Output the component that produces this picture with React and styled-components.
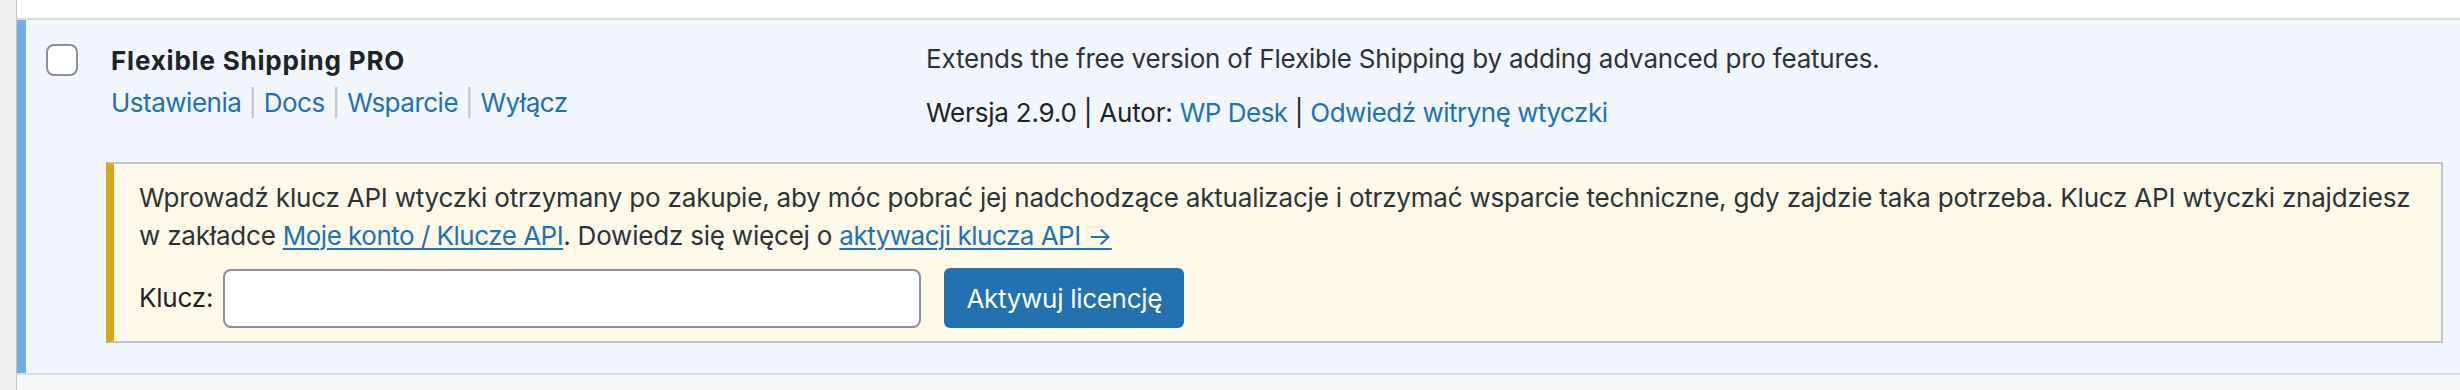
import React from "react"
import styled, { createGlobalStyle } from "styled-components"

const GlobalStyle = createGlobalStyle`
  html, body {
    margin: 0;
    padding: 0;
    background: #f0f0f1;
    font-family: Inter, "Liberation Sans", Arial, sans-serif;
    font-size: 26px;
    letter-spacing: -0.2px;
    color: #2c3338;
  }
`

const Page = styled.div`
  padding-left: 16px;
  min-height: 100vh;
  display: flex;
`

const Table = styled.div`
  flex: 1;
  min-width: 0;
  display: flex;
  flex-direction: column;
  border-left: 1px solid #c3c4c7;
  background: #fff;
`

const PrevRow = styled.div`
  height: 18px;
  background: #fff;
`

const PluginRow = styled.div`
  border-top: 2px solid #dcdcde;
  background: #f0f6fc;
  box-shadow: inset 9px 0 0 #72aee6;
  padding: 20px 17px 30px 0;
`

const MainLine = styled.div`
  display: grid;
  grid-template-columns: 94px 815px 1fr;
  align-items: start;
`

const CheckCell = styled.div`
  padding: 4px 0 0 29px;
`

const Checkbox = styled.input`
  appearance: none;
  display: block;
  margin: 0;
  width: 32px;
  height: 32px;
  border: 2px solid #8c8f94;
  border-radius: 8px;
  background: #fff;
  box-sizing: border-box;
`

const TitleCell = styled.div`
  padding-top: 2px;
`

const PluginName = styled.div`
  font-weight: 700;
  letter-spacing: 0.8px;
  color: #1d2327;
  line-height: 38px;
  margin-bottom: 4px;
`

const RowActions = styled.div`
  display: flex;
  align-items: center;
  line-height: 38px;
`

const Link = styled.a`
  color: #2271b1;
  letter-spacing: -0.5px;
  text-decoration: ${p => (p.$underline ? "underline" : "none")};
  text-underline-offset: 3px;
  text-decoration-thickness: 2px;
`

const Sep = styled.span`
  color: #c3c4c7;
  padding: 0 7px;
`

const DescCell = styled.div`
  min-width: 0;
`

const Description = styled.p`
  margin: 0 0 16px;
  line-height: 38px;
  color: #2c3338;
`

const Meta = styled.div`
  line-height: 38px;
  color: #1d2327;
`

const Notice = styled.div`
  margin: 30px 0 0 89px;
  background: #fcf9e8;
  border: 2px solid #c3c4c7;
  border-left: 8px solid #dba617;
  padding: 15px 25px 13px 25px;
  min-width: 0;
`

const NoticeLine = styled.span`
  display: block;
  white-space: nowrap;
  line-height: 38px;
  color: #2c3338;
`

const FormRow = styled.div`
  display: flex;
  align-items: center;
  margin-top: 13px;
`

const Label = styled.label`
  line-height: 38px;
  color: #1d2327;
  margin-right: 10px;
`

const KeyInput = styled.input`
  width: 698px;
  height: 59px;
  box-sizing: border-box;
  border: 2px solid #8c8f94;
  border-radius: 8px;
  background: #fff;
  margin: 0;
  font: inherit;
`

const Button = styled.button`
  margin-left: 23px;
  width: 240px;
  height: 60px;
  border: none;
  border-radius: 6px;
  background: #2271b1;
  color: #fff;
  font: inherit;
  letter-spacing: -0.3px;
  cursor: pointer;
`

const NextRow = styled.div`
  flex: 1;
  border-top: 2px solid #dcdcde;
  background: #f6f7f7;
`

const actions = ["Ustawienia", "Docs", "Wsparcie", "Wyłącz"]

export default function App() {
  return (
    <>
      <GlobalStyle />
      <Page>
        <Table>
          <PrevRow />
          <PluginRow>
            <MainLine>
              <CheckCell>
                <Checkbox type="checkbox" />
              </CheckCell>
              <TitleCell>
                <PluginName>Flexible Shipping PRO</PluginName>
                <RowActions>
                  {actions.map((a, i) => (
                    <React.Fragment key={a}>
                      {i > 0 && <Sep>|</Sep>}
                      <Link href="#">{a}</Link>
                    </React.Fragment>
                  ))}
                </RowActions>
              </TitleCell>
              <DescCell>
                <Description>
                  Extends the free version of Flexible Shipping by adding advanced pro features.
                </Description>
                <Meta>
                  Wersja 2.9.0 | Autor: <Link href="#">WP Desk</Link> |{" "}
                  <Link href="#">Odwiedź witrynę wtyczki</Link>
                </Meta>
              </DescCell>
            </MainLine>
            <Notice>
              <NoticeLine>
                Wprowadź klucz API wtyczki otrzymany po zakupie, aby móc pobrać jej nadchodzące
                aktualizacje i otrzymać wsparcie techniczne, gdy zajdzie taka potrzeba. Klucz API
                wtyczki znajdziesz
              </NoticeLine>
              <NoticeLine>
                w zakładce <Link $underline href="#">Moje konto / Klucze API</Link>. Dowiedz się
                więcej o <Link $underline href="#">aktywacji klucza API →</Link>
              </NoticeLine>
              <FormRow>
                <Label htmlFor="api-key">Klucz:</Label>
                <KeyInput id="api-key" type="text" />
                <Button type="button">Aktywuj licencję</Button>
              </FormRow>
            </Notice>
          </PluginRow>
          <NextRow />
        </Table>
      </Page>
    </>
  )
}
